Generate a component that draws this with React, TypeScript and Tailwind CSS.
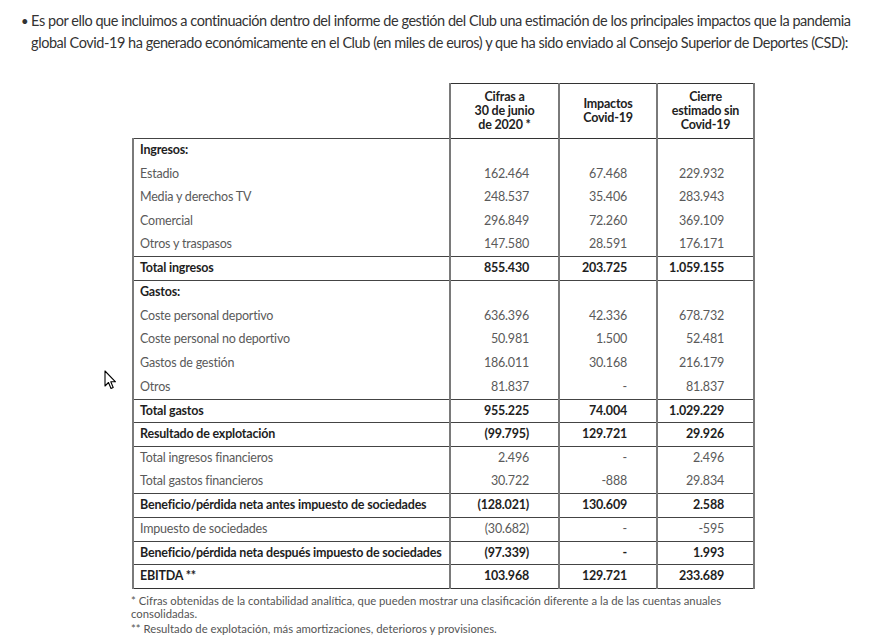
import React from "react";

type Row = { label: string; v: [string, string, string]; bold?: boolean };

const blocks: Row[][] = [
  [
    { label: "Ingresos:", v: ["", "", ""], bold: true },
    { label: "Estadio", v: ["162.464", "67.468", "229.932"] },
    { label: "Media y derechos TV", v: ["248.537", "35.406", "283.943"] },
    { label: "Comercial", v: ["296.849", "72.260", "369.109"] },
    { label: "Otros y traspasos", v: ["147.580", "28.591", "176.171"] },
  ],
  [{ label: "Total ingresos", v: ["855.430", "203.725", "1.059.155"], bold: true }],
  [
    { label: "Gastos:", v: ["", "", ""], bold: true },
    { label: "Coste personal deportivo", v: ["636.396", "42.336", "678.732"] },
    { label: "Coste personal no deportivo", v: ["50.981", "1.500", "52.481"] },
    { label: "Gastos de gestión", v: ["186.011", "30.168", "216.179"] },
    { label: "Otros", v: ["81.837", "-", "81.837"] },
  ],
  [{ label: "Total gastos", v: ["955.225", "74.004", "1.029.229"], bold: true }],
  [{ label: "Resultado de explotación", v: ["(99.795)", "129.721", "29.926"], bold: true }],
  [
    { label: "Total ingresos financieros", v: ["2.496", "-", "2.496"] },
    { label: "Total gastos financieros", v: ["30.722", "-888", "29.834"] },
  ],
  [{ label: "Beneficio/pérdida neta antes impuesto de sociedades", v: ["(128.021)", "130.609", "2.588"], bold: true }],
  [{ label: "Impuesto de sociedades", v: ["(30.682)", "-", "-595"] }],
  [{ label: "Beneficio/pérdida neta después impuesto de sociedades", v: ["(97.339)", "-", "1.993"], bold: true }],
  [{ label: "EBITDA **", v: ["103.968", "129.721", "233.689"], bold: true }],
];

const font = { fontFamily: "Lato, 'Open Sans', sans-serif" } as React.CSSProperties;

export default function App() {
  return (
    <div className="relative w-[889px] h-[638px] bg-white overflow-hidden" style={font}>
      <div className="pt-[10px] pl-[21px] flex gap-[3px] text-[14.5px] leading-[22px] text-[#333] tracking-[-0.45px] whitespace-nowrap">
        <span className="text-[13px]">•</span>
        <p>
          Es por ello que incluimos a continuación dentro del informe de gestión del Club una estimación de los principales impactos que la pandemia
          <br />
          global Covid-19 ha generado económicamente en el Club (en miles de euros) y que ha sido enviado al Consejo Superior de Deportes (CSD):
        </p>
      </div>

      <table className="ml-[132px] mt-[29px] border-collapse text-[12.5px] tracking-[-0.2px]">
        <colgroup>
          <col className="w-[317px]" />
          <col className="w-[109px]" />
          <col className="w-[98px]" />
          <col className="w-[97px]" />
        </colgroup>
        <thead>
          <tr className="h-[55px]">
            <th className="p-0"></th>
            <th className="p-0 border-t border-t-[#333] border-l-2 border-l-[#7a7a7a] border-b border-b-[#333] font-bold text-[12.5px] leading-[14px] text-[#222] align-middle">
              Cifras a<br />30 de junio<br />de 2020 *
            </th>
            <th className="p-0 border-t border-t-[#333] border-l-2 border-l-[#7a7a7a] border-b border-b-[#333] font-bold text-[12.5px] leading-[14px] text-[#222] align-middle">
              Impactos<br />Covid-19
            </th>
            <th className="p-0 border-t border-t-[#333] border-l-2 border-l-[#7a7a7a] border-r-2 border-r-[#7a7a7a] border-b border-b-[#333] font-bold text-[12.5px] leading-[14px] text-[#222] align-middle">
              Cierre<br />estimado sin<br />Covid-19
            </th>
          </tr>
        </thead>
        <tbody>
          {blocks.map((block, bi) =>
            block.map((r, ri) => {
              const top = ri === 0 ? "border-t border-t-[#444]" : "";
              const bottom = bi === blocks.length - 1 ? "border-b border-b-[#333]" : "";
              const txt = r.bold ? "font-bold text-[#1e1e1e]" : "font-normal text-[#5a5a5a]";
              return (
                <tr key={`${bi}-${ri}`} className="h-[23.7px]">
                  <td className={`p-0 pl-[6px] border-l-2 border-l-[#7a7a7a] ${top} ${bottom} ${txt}`}>{r.label}</td>
                  {r.v.map((v, vi) => (
                    <td
                      key={vi}
                      className={`p-0 pr-[29px] text-right border-l-2 border-l-[#7a7a7a] ${vi === 2 ? "border-r-2 border-r-[#7a7a7a]" : ""} ${top} ${bottom} ${txt}`}
                    >
                      {v}
                    </td>
                  ))}
                </tr>
              );
            })
          )}
        </tbody>
      </table>

      <div className="ml-[131px] mt-[5px] w-[610px] text-[11.3px] leading-[13px] text-[#555]" style={font}>
        <p>* Cifras obtenidas de la contabilidad analítica, que pueden mostrar una clasificación diferente a la de las cuentas anuales consolidadas.</p>
        <p className="mt-[2px]">** Resultado de explotación, más amortizaciones, deterioros y provisiones.</p>
      </div>

      <svg className="absolute left-[104px] top-[370px]" width="14" height="21" viewBox="0 0 14 21">
        <path d="M1 1 L1 16 L4.5 12.5 L7 18.5 L9.2 17.5 L6.8 11.8 L11.5 11.8 Z" fill="#fff" stroke="#000" strokeWidth="1.1" strokeLinejoin="round" />
      </svg>
    </div>
  );
}
